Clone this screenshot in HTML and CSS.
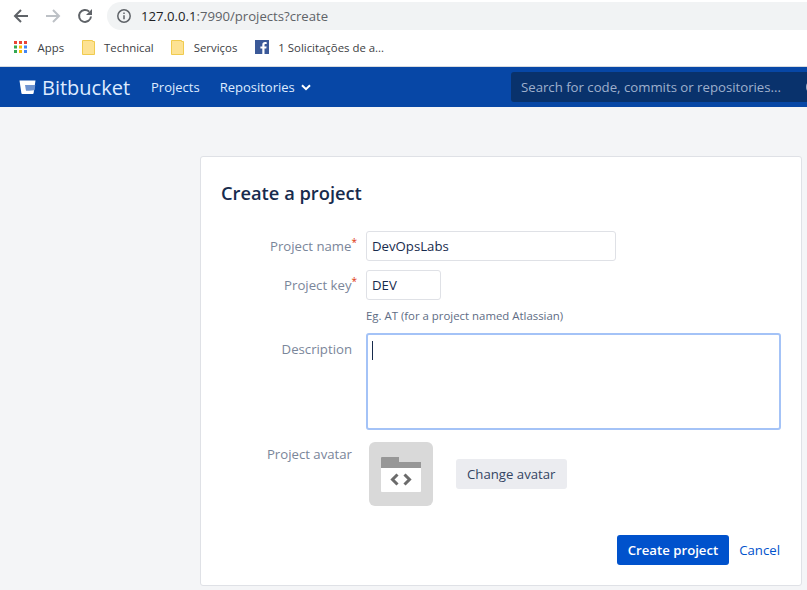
FILE: index.html
```html
<!DOCTYPE html>
<html lang="en">
<head>
    <meta charset="UTF-8">
    <title>Create a project - Bitbucket</title>
    <link rel="stylesheet" href="styles.css">
</head>
<body>
    <div class="toolbar">
        <svg class="tool-icon" width="18" height="18" viewBox="0 0 18 18"><path d="M16 9H3M9 3L3 9l6 6" fill="none" stroke="#5f6368" stroke-width="2"/></svg>
        <svg class="tool-icon" width="18" height="18" viewBox="0 0 18 18"><path d="M2 9h13M9 3l6 6-6 6" fill="none" stroke="#bdc1c6" stroke-width="2"/></svg>
        <svg class="tool-icon" width="18" height="18" viewBox="0 0 18 18"><path d="M15 9.500A6 6 0 1 1 13.200 4.600" fill="none" stroke="#5f6368" stroke-width="2"/><path d="M16 2v6h-6z" fill="#5f6368"/></svg>
        <div class="omnibox">
            <svg width="16" height="16" viewBox="0 0 16 16"><circle cx="8" cy="8" r="6.200" fill="none" stroke="#5f6368" stroke-width="1.500"/><path d="M8 7.200v4M8 4.600v1.500" stroke="#5f6368" stroke-width="1.500"/></svg>
            <span class="url"><span class="url-host">127.0.0.1</span>:7990/projects?create</span>
        </div>
    </div>

    <div class="bookmarks">
        <div class="bookmark">
            <svg width="14" height="14" viewBox="0 0 14 14">
                <rect x="0" y="1" width="3" height="3" fill="#ea4335"/><rect x="5" y="1" width="3" height="3" fill="#ea4335"/><rect x="10" y="1" width="3" height="3" fill="#ea4335"/>
                <rect x="0" y="5.500" width="3" height="3" fill="#34a853"/><rect x="5" y="5.500" width="3" height="3" fill="#fbbc05"/><rect x="10" y="5.500" width="3" height="3" fill="#4285f4"/>
                <rect x="0" y="10" width="3" height="3" fill="#34a853"/><rect x="5" y="10" width="3" height="3" fill="#fbbc05"/><rect x="10" y="10" width="3" height="3" fill="#4285f4"/>
            </svg>
            <span>Apps</span>
        </div>
        <div class="bookmark">
            <svg width="13" height="15" viewBox="0 0 13 15"><path d="M.5.500h10v1h2v13H.5z" fill="#fde293" stroke="#f0cb4f"/></svg>
            <span>Technical</span>
        </div>
        <div class="bookmark">
            <svg width="13" height="15" viewBox="0 0 13 15"><path d="M.5.500h10v1h2v13H.5z" fill="#fde293" stroke="#f0cb4f"/></svg>
            <span>Serviços</span>
        </div>
        <div class="bookmark">
            <svg width="14" height="14" viewBox="0 0 14 14"><rect width="14" height="14" fill="#3b5998"/><path d="M9.500 14V8.500h1.800l.3-2.100H9.500V5.100c0-.6.2-1 1-1h1.200V2.200c-.3 0-.9-.1-1.700-.1-1.700 0-2.700 1-2.700 2.800v1.500H5.400v2.100h1.900V14z" fill="#fff"/></svg>
            <span>1 Solicitações de a...</span>
        </div>
    </div>

    <header class="nav">
        <div class="logo">
            <svg width="18" height="16" viewBox="0 0 18 16"><path d="M.5 1.500h16l-1.900 12.700a1 1 0 0 1-1 .8H3.400a1 1 0 0 1-1-.8z" fill="#fff"/><path d="M6 6h10.300l-.8 5.200-5.500.6H7z" fill="#6f94d0"/></svg>
            <span>Bitbucket</span>
        </div>
        <a class="nav-link">Projects</a>
        <a class="nav-link">Repositories
            <svg width="10" height="7" viewBox="0 0 10 7"><path d="M1 1.200l4 4 4-4" fill="none" stroke="#fff" stroke-width="2"/></svg>
        </a>
        <div class="search">
            <span>Search for code, commits or repositories...</span>
            <i class="search-icon"></i>
        </div>
    </header>

    <main class="content">
        <section class="card">
            <h1>Create a project</h1>
            <form class="project-form">
                <label class="field-label field-label-input">Project name<sup>*</sup></label>
                <input class="text-input name-input" type="text" value="DevOpsLabs">

                <label class="field-label field-label-input">Project key<sup>*</sup></label>
                <div>
                    <input class="text-input key-input" type="text" value="DEV">
                    <p class="hint">Eg. AT (for a project named Atlassian)</p>
                </div>

                <label class="field-label field-label-desc">Description</label>
                <div class="textarea"><i class="caret"></i></div>

                <label class="field-label field-label-avatar">Project avatar</label>
                <div class="avatar-row">
                    <div class="avatar">
                        <svg width="40" height="36" viewBox="0 0 40 36">
                            <path d="M0 2a1 1 0 0 1 1-1h17v5h22v6H0z" fill="#979797"/>
                            <path d="M0 12h40v23a1 1 0 0 1-1 1H1a1 1 0 0 1-1-1z" fill="#fff"/>
                            <path d="M16.500 18.500l-5 5 5 5M23.500 18.500l5 5-5 5" fill="none" stroke="#6b6b6b" stroke-width="3"/>
                        </svg>
                    </div>
                    <button class="btn-subtle" type="button">Change avatar</button>
                </div>

                <div class="actions">
                    <button class="btn-primary" type="button">Create project</button>
                    <a class="cancel">Cancel</a>
                </div>
            </form>
        </section>
    </main>
</body>
</html>
```

FILE: styles.css
```css
* {
    box-sizing: border-box;
}
html, body {
    height: 100%;
}
body {
    margin: 0;
    overflow: hidden;
    background: #f4f5f7;
    font-family: "Open Sans", "Noto Sans", sans-serif;
    font-size: 13.200px;
    color: #172b4d;
}

/* Browser chrome */
.toolbar {
    height: 32px;
    background: #fff;
    display: flex;
    align-items: center;
    padding: 2px 0 2px 12px;
}
.tool-icon {
    margin-right: 14px;
}
.omnibox {
    flex: 1;
    height: 28px;
    margin-left: -1px;
    padding-left: 9px;
    display: flex;
    align-items: center;
    gap: 9px;
    background: #f1f3f4;
    border-radius: 14px 0 0 14px;
    font-size: 13.150px;
    color: #5f6368;
}
.url-host {
    color: #202124;
}
.bookmarks {
    height: 34px;
    background: #fff;
    display: flex;
    align-items: center;
    gap: 17.500px;
    padding: 0 0 4px 14px;
    font-size: 11.400px;
    color: #3c4043;
}
.bookmark {
    display: flex;
    align-items: center;
    gap: 9.500px;
}

/* Bitbucket header */
.nav {
    height: 41px;
    border-top: 1px solid #d7dbe0;
    background: #0747a6;
    display: flex;
    align-items: center;
    padding-left: 19px;
    color: #deebff;
    font-size: 13px;
}
.logo {
    display: flex;
    align-items: center;
    gap: 5px;
    margin-right: 21px;
    color: #deebff;
    font-size: 20px;
}
.nav-link {
    margin-right: 20px;
}
.nav-link svg {
    margin-left: 3px;
    vertical-align: 1px;
}
.search {
    margin-left: auto;
    width: 296px;
    height: 30px;
    padding-left: 10px;
    display: flex;
    align-items: center;
    justify-content: space-between;
    background: #09326c;
    border-radius: 3px 0 0 3px;
    color: #9fb0cc;
    font-size: 13.200px;
}
.search-icon {
    width: 6px;
    height: 10px;
    margin-right: -5px;
    border: 2px solid #9fb0cc;
    border-radius: 50%;
}

/* Form card */
.content {
    padding: 49px 5px 0 200px;
}
.card {
    height: 430px;
    padding: 23px 21px 0 20px;
    background: #fff;
    border: 1px solid #dfe1e6;
    border-radius: 3px;
}
h1 {
    margin: 0 0 25px;
    font-size: 18.300px;
    font-weight: 600;
    line-height: 26px;
    color: #172b4d;
}
.project-form {
    display: grid;
    grid-template-columns: 132px 1fr;
    column-gap: 13px;
}
.field-label {
    text-align: right;
    color: #7a869a;
    white-space: nowrap;
}
.field-label sup {
    margin-right: -4px;
    color: #de350b;
    font-size: 10px;
    line-height: 0;
}
.field-label-input {
    line-height: 30px;
}
.field-label-desc {
    margin-top: 7px;
    padding-right: 1px;
    line-height: 18px;
}
.field-label-avatar {
    margin-top: 15px;
    padding-right: 1px;
    line-height: 18px;
}
.text-input {
    display: block;
    height: 30px;
    padding: 0 5px;
    border: 1px solid #dfe1e6;
    border-radius: 3px;
    background: #fff;
    font: inherit;
    color: #172b4d;
}
.name-input {
    width: 250px;
    margin-bottom: 9px;
}
.key-input {
    width: 75px;
}
.hint {
    margin: 0 0 9px;
    padding-top: 8px;
    font-size: 11.400px;
    line-height: 16px;
    color: #5e6c84;
}
.textarea {
    width: 415px;
    height: 97px;
    padding: 6px 4px;
    border: 2px solid #a4c3f7;
    border-radius: 3px;
}
.caret {
    display: block;
    width: 1px;
    height: 19px;
    background: #172b4d;
}
.avatar-row {
    margin-top: 12px;
    padding-left: 3px;
    display: flex;
    align-items: center;
    gap: 23px;
}
.avatar {
    width: 64px;
    height: 64px;
    padding: 14px 12px;
    background: #d9d9d9;
    border-radius: 6px;
}
.avatar svg {
    display: block;
}
.btn-subtle {
    height: 30px;
    padding: 0 12px 0 11px;
    border: none;
    border-radius: 3px;
    background: #ebecf0;
    font: inherit;
    color: #344563;
}
.actions {
    grid-column: 1 / -1;
    margin-top: 29px;
    padding-right: 1px;
    display: flex;
    justify-content: flex-end;
    align-items: center;
    gap: 10px;
}
.btn-primary {
    height: 30px;
    padding: 0 11px;
    border: none;
    border-radius: 3px;
    background: #0052cc;
    font: inherit;
    font-weight: 600;
    color: #fff;
}
.cancel {
    color: #0052cc;
}
```
